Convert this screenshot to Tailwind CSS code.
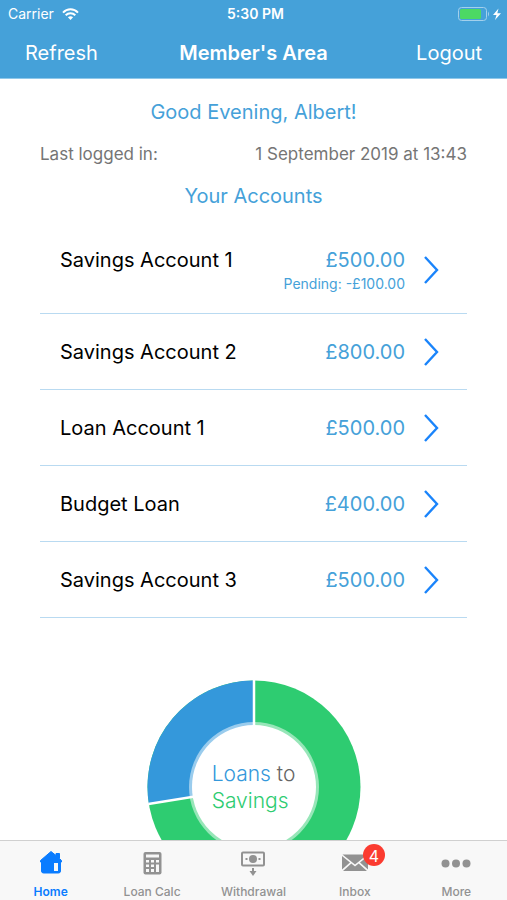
<!DOCTYPE html>
<html lang="en">
<head>
    <meta charset="UTF-8">
    <meta name="viewport" content="width=device-width, initial-scale=1.0">
    <title>Member's Area</title>
    <script src="https://cdn.jsdelivr.net/npm/@tailwindcss/browser@4"></script>
</head>
<body class="h-screen flex flex-col bg-white font-['Inter','Liberation_Sans',sans-serif] text-black">
    <header class="shrink-0 bg-[#45a1d9] text-white border-b border-[#8fc8ea]">
        <!-- Status bar -->
        <div class="grid grid-cols-3 items-center h-[27px] pl-2 pr-1 text-sm">
            <div class="flex items-center gap-2">
                <span>Carrier</span>
                <svg class="w-[17px] h-3" viewBox="0 0 17 12" fill="none" stroke="currentColor" stroke-width="2">
                    <path d="M1 4.6 C5.2 0.2 11.8 0.2 16 4.6"/>
                    <path d="M3.7 7.3 C6.4 4.5 10.6 4.5 13.3 7.3"/>
                    <path d="M8.5 12 L5.9 9.3 C7.3 7.9 9.7 7.9 11.1 9.3 Z" fill="currentColor" stroke="none"/>
                </svg>
            </div>
            <span class="text-center font-semibold">5:30 PM</span>
            <svg class="justify-self-end w-[45px] h-4" viewBox="0 0 45 16">
                <rect x="0.5" y="1.5" width="28" height="13" rx="3" fill="none" stroke="#a3d0ec"/>
                <rect x="2" y="3" width="21" height="10" rx="1.5" fill="#4cd964"/>
                <path d="M30 5.5 Q32 8 30 10.5 Z" fill="#a3d0ec"/>
                <path d="M40.5 2.5 L35 9 H38.5 L37 14 L43 7.2 H39.3 Z" fill="#fff"/>
            </svg>
        </div>

        <!-- Title bar -->
        <div class="flex items-center justify-between h-[51px] px-[25px] text-xl">
            <button class="flex-1 text-left">Refresh</button>
            <h1 class="font-semibold">Member's Area</h1>
            <button class="flex-1 text-right">Logout</button>
        </div>
    </header>

    <main class="flex-1 min-h-0 overflow-hidden px-10 pt-[19px]">
        <h2 class="text-center text-xl leading-7 text-[#45a1d9]">Good Evening, Albert!</h2>
        <div class="flex justify-between mt-4 text-[17px] leading-6 text-[#757575]">
            <span>Last logged in:</span>
            <span>1 September 2019 at 13:43</span>
        </div>
        <h2 class="mt-4 text-center text-xl leading-7 text-[#45a1d9]">Your Accounts</h2>

        <ul class="mt-3">
            <li class="border-b border-[#b9daf1]">
                <a href="#" class="flex items-center h-[91px] pl-5 pr-7 pt-1">
                    <div class="flex-1">
                        <div class="flex justify-between text-xl leading-7">
                            <span>Savings Account 1</span>
                            <span class="text-[#45a1d9]">£500.00</span>
                        </div>
                        <p class="text-right text-sm text-[#45a1d9]">Pending: -£100.00</p>
                    </div>
                    <svg class="ml-[18px] w-4 h-7" viewBox="0 0 16 28" fill="none" stroke="#1a84fb" stroke-width="2.4"><path d="M2 1 L14 14 L2 27"/></svg>
                </a>
            </li>
            <li class="border-b border-[#b9daf1]">
                <a href="#" class="flex items-center h-[75px] pl-5 pr-7 text-xl">
                    <span class="flex-1">Savings Account 2</span>
                    <span class="text-[#45a1d9]">£800.00</span>
                    <svg class="ml-[18px] w-4 h-7" viewBox="0 0 16 28" fill="none" stroke="#1a84fb" stroke-width="2.4"><path d="M2 1 L14 14 L2 27"/></svg>
                </a>
            </li>
            <li class="border-b border-[#b9daf1]">
                <a href="#" class="flex items-center h-[75px] pl-5 pr-7 text-xl">
                    <span class="flex-1">Loan Account 1</span>
                    <span class="text-[#45a1d9]">£500.00</span>
                    <svg class="ml-[18px] w-4 h-7" viewBox="0 0 16 28" fill="none" stroke="#1a84fb" stroke-width="2.4"><path d="M2 1 L14 14 L2 27"/></svg>
                </a>
            </li>
            <li class="border-b border-[#b9daf1]">
                <a href="#" class="flex items-center h-[75px] pl-5 pr-7 text-xl">
                    <span class="flex-1">Budget Loan</span>
                    <span class="text-[#45a1d9]">£400.00</span>
                    <svg class="ml-[18px] w-4 h-7" viewBox="0 0 16 28" fill="none" stroke="#1a84fb" stroke-width="2.4"><path d="M2 1 L14 14 L2 27"/></svg>
                </a>
            </li>
            <li class="border-b border-[#b9daf1]">
                <a href="#" class="flex items-center h-[75px] pl-5 pr-7 text-xl">
                    <span class="flex-1">Savings Account 3</span>
                    <span class="text-[#45a1d9]">£500.00</span>
                    <svg class="ml-[18px] w-4 h-7" viewBox="0 0 16 28" fill="none" stroke="#1a84fb" stroke-width="2.4"><path d="M2 1 L14 14 L2 27"/></svg>
                </a>
            </li>
        </ul>

        <!-- Loans to savings chart -->
        <div class="grid place-items-center mt-[62px]">
            <svg class="col-start-1 row-start-1 w-[214px] h-[214px]" viewBox="-107 -107 214 214">
                <circle r="106.5" fill="#2ecc71"/>
                <path d="M0 0 L-105.1 17.1 A106.5 106.5 0 0 1 0 -106.5 Z" fill="#3498db"/>
                <path d="M0 -107 V0 L-105.6 17.1" fill="none" stroke="#fff" stroke-width="2.5"/>
                <circle r="65" fill="#fff" fill-opacity="0.5"/>
                <circle r="62" fill="#fff"/>
            </svg>
            <p class="col-start-1 row-start-1 text-[21px] leading-[27px] font-light text-[#666]"><span class="text-[#3498db]">Loans</span> to<br><span class="text-[#2ecc71]">Savings</span></p>
        </div>
    </main>

    <nav class="shrink-0 grid grid-cols-5 h-[60px] pt-2 bg-[#f8f8f8] border-t border-[#d0d0d0] text-xs font-medium text-[#929292]">
        <a href="#" class="flex flex-col items-center gap-[7px] font-semibold text-[#0a7cff]">
            <svg class="w-7 h-7" viewBox="0 0 28 28" fill="currentColor">
                <path stroke="currentColor" stroke-linejoin="round" d="M14 2.5 L19 6.5 V4.5 H22.5 V9.5 L24.5 11.5 V13 H23.5 V22 Q23.5 24 21.5 24 H6.5 Q4.5 24 4.5 22 V13 H3.5 V11.5 Z"/>
                <rect x="17" y="14" width="4" height="8" fill="#f8f8f8"/>
            </svg>
            <span>Home</span>
        </a>
        <a href="#" class="flex flex-col items-center gap-[7px]">
            <svg class="w-7 h-7" viewBox="0 0 28 28">
                <rect x="5.5" y="3" width="18" height="22.5" rx="2" fill="currentColor"/>
                <path fill="#f8f8f8" d="M8 5.5 H21 V8.5 H8 Z M8 11 h3 v2.5 h-3 Z M13 11 h3 v2.5 h-3 Z M18 11 h3 v2.5 h-3 Z M8 15.5 h3 v2.5 h-3 Z M13 15.5 h3 v2.5 h-3 Z M18 15.5 h3 v7.5 h-3 Z M8 20 h3 v3 h-3 Z M13 20 h3 v3 h-3 Z"/>
            </svg>
            <span>Loan Calc</span>
        </a>
        <a href="#" class="flex flex-col items-center gap-[7px]">
            <svg class="w-7 h-7" viewBox="0 0 28 28" fill="none" stroke="currentColor" stroke-width="2">
                <rect x="3" y="3.5" width="22" height="13" rx="1"/>
                <circle cx="14" cy="10" r="4" fill="currentColor" stroke="none"/>
                <path d="M6.5 10 h2 M19.5 10 h2"/>
                <path d="M14 19 V24"/>
                <path d="M10.5 22 H17.5 L14 27 Z" fill="currentColor" stroke="none"/>
            </svg>
            <span>Withdrawal</span>
        </a>
        <a href="#" class="flex flex-col items-center gap-[7px]">
            <span class="relative">
                <svg class="w-7 h-7" viewBox="0 0 28 28" fill="currentColor">
                    <path d="M1.5 5.5 H26.5 L14 15.5 Z M1 7 L9 13.5 L1 20.5 Z M27 7 V20.5 L19 13.5 Z M10.3 14.5 L14 17.5 L17.7 14.5 L26 22 H2 Z"/>
                </svg>
                <span class="absolute -top-[5px] left-[22px] grid place-items-center size-[22px] rounded-full bg-[#fb3b30] text-base font-normal text-white">4</span>
            </span>
            <span>Inbox</span>
        </a>
        <a href="#" class="flex flex-col items-center gap-[7px]">
            <svg class="w-[30px] h-7" viewBox="0 0 30 28" fill="currentColor">
                <circle cx="4.5" cy="14.5" r="4"/>
                <circle cx="15" cy="14.5" r="4"/>
                <circle cx="25.5" cy="14.5" r="4"/>
            </svg>
            <span>More</span>
        </a>
    </nav>
</body>
</html>
